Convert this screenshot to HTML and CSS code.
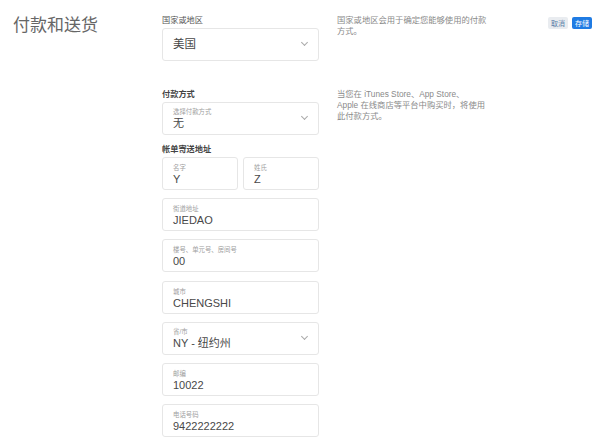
FILE: index.html
```html
<!DOCTYPE html>
<html lang="zh-CN">

<head>
  <meta charset="UTF-8">
  <meta name="viewport" content="width=device-width, initial-scale=1.0">
  <title>付款和送货</title>
  <link rel="stylesheet" href="styles.css">
</head>

<body>
  <div class="page">
    <h1 class="title">付款和送货</h1>

    <div class="sections">
      <!-- Country -->
      <div class="section">
        <div class="fields">
          <div class="label">国家或地区</div>
          <div class="box select">
            <div class="value big">美国</div>
            <span class="chevron"></span>
          </div>
        </div>
        <p class="desc">国家或地区会用于确定您能够使用的付款方式。</p>
      </div>

      <!-- Payment -->
      <div class="section">
        <div class="fields">
          <div class="label strong">付款方式</div>
          <div class="box select">
            <div>
              <div class="hint">选择付款方式</div>
              <div class="value">无</div>
            </div>
            <span class="chevron"></span>
          </div>

          <div class="label strong">帐单寄送地址</div>
          <div class="row">
            <div class="box">
              <div class="hint">名字</div>
              <div class="value">Y</div>
            </div>
            <div class="box">
              <div class="hint">姓氏</div>
              <div class="value">Z</div>
            </div>
          </div>
          <div class="box">
            <div class="hint">街道地址</div>
            <div class="value">JIEDAO</div>
          </div>
          <div class="box">
            <div class="hint">楼号、单元号、房间号</div>
            <div class="value">00</div>
          </div>
          <div class="box">
            <div class="hint">城市</div>
            <div class="value">CHENGSHI</div>
          </div>
          <div class="box select">
            <div>
              <div class="hint">省/市</div>
              <div class="value">NY - 纽约州</div>
            </div>
            <span class="chevron"></span>
          </div>
          <div class="box">
            <div class="hint">邮编</div>
            <div class="value">10022</div>
          </div>
          <div class="box">
            <div class="hint">电话号码</div>
            <div class="value">9422222222</div>
          </div>
        </div>
        <p class="desc">当您在 iTunes Store、App Store、<br>Apple 在线商店等平台中购买时，将使用此付款方式。</p>
      </div>
    </div>

    <div class="actions">
      <button class="btn cancel">取消</button>
      <button class="btn save">存储</button>
    </div>
  </div>
</body>

</html>
```

FILE: styles.css
```css
* {
  margin: 0;
  padding: 0;
  box-sizing: border-box;
}

body {
  font-family: 'Liberation Sans', 'Noto Sans CJK SC', sans-serif;
  background: #ffffff;
  color: #333;
}

.page {
  display: flex;
  align-items: flex-start;
  padding-top: 14px;
}

.title {
  width: 162px;
  padding-left: 13px;
  font-size: 17px;
  font-weight: normal;
  line-height: 24px;
  color: #666;
}

.sections {
  width: 327px;
}

.section {
  display: flex;
  align-items: flex-start;
  margin-bottom: 27px;
}

.section:last-child {
  margin-bottom: 0;
}

.fields {
  width: 157px;
  flex-shrink: 0;
  display: flex;
  flex-direction: column;
  gap: 8.3px;
}

.label {
  font-size: 8.2px;
  line-height: 11px;
  color: #555;
  margin-bottom: -6.5px;
  padding-top: 1px;
}

.label.strong {
  color: #444;
  font-weight: bold;
}

.desc {
  width: 152px;
  margin-left: 18px;
  font-size: 8.3px;
  line-height: 11px;
  color: #8a8a8a;
  padding-top: 1px;
}

.box {
  height: 33px;
  border: 1px solid #e6e6e6;
  border-radius: 3px;
  padding: 5px 10px 0 10px;
  background: #fff;
}

.select {
  display: flex;
  align-items: center;
  justify-content: space-between;
  padding-top: 0;
  padding-right: 11px;
}

.row {
  display: flex;
  gap: 5px;
}

.row .box {
  flex: 1;
}

.hint {
  font-size: 6.4px;
  line-height: 9px;
  color: #a0a0a0;
}

.value {
  font-size: 11px;
  line-height: 14px;
  color: #484848;
}

.value.big {
  font-size: 11.5px;
}

.chevron {
  width: 5px;
  height: 5px;
  border-right: 1px solid #aaa;
  border-bottom: 1px solid #aaa;
  transform: rotate(45deg);
  margin-top: -3px;
}

.actions {
  margin-left: auto;
  padding-right: 20px;
  padding-top: 3px;
  display: flex;
  gap: 4px;
}

.btn {
  border: none;
  border-radius: 2px;
  font-family: inherit;
  font-size: 7px;
  line-height: 11px;
  padding: 0 3px;
  height: 12px;
}

.cancel {
  background: #e9ecf0;
  color: #5b7fa8;
}

.save {
  background: #1f7be3;
  color: #fff;
}
```
